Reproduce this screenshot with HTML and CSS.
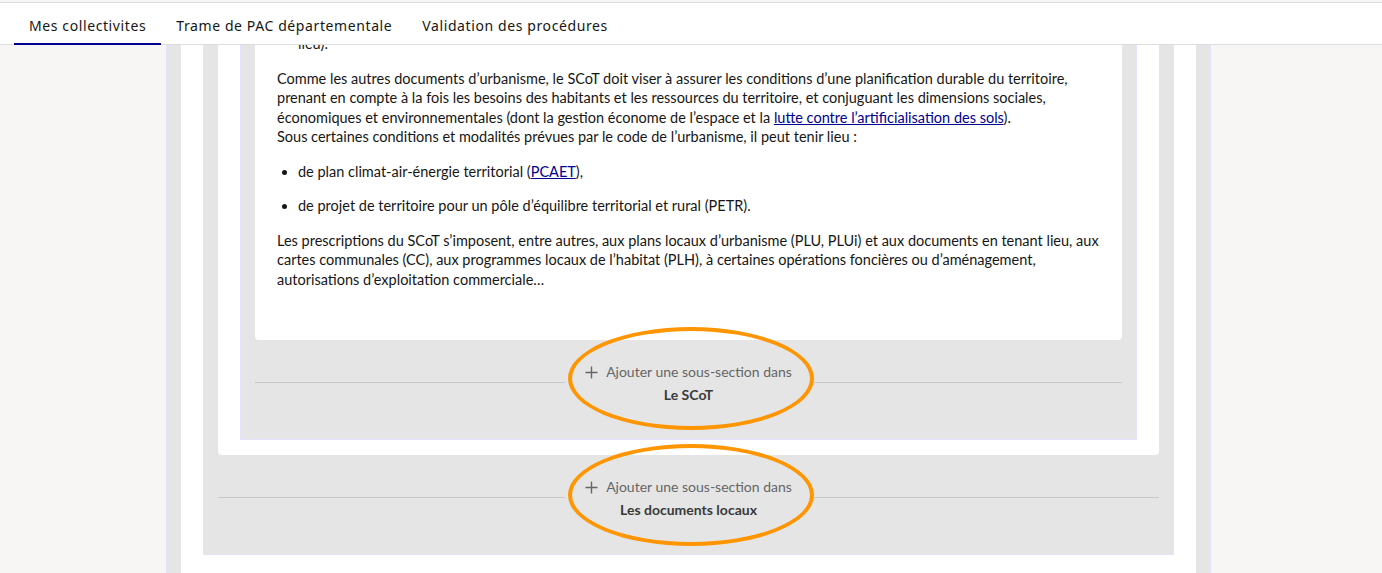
FILE: index.html
```html
<!DOCTYPE html>
<html lang="fr">
<head>
<meta charset="utf-8">
<title>Trame PAC</title>
<link rel="stylesheet" href="styles.css">
</head>
<body>
<header class="topbar">
  <nav class="tabs">
    <a class="tab active">Mes collectivites</a>
    <a class="tab">Trame de PAC départementale</a>
    <a class="tab">Validation des procédures</a>
  </nav>
</header>
<main class="main">
  <div class="page">
    <section class="section level1">
      <div class="card">
        <section class="section">
          <div class="card">
            <section class="section">
              <div class="card content">
                <p class="cont">lieu).</p>
                <p>Comme les autres documents d’urbanisme, le SCoT doit viser à assurer les conditions d’une planification durable du territoire, prenant en compte à la fois les besoins des habitants et les ressources du territoire, et conjuguant les dimensions sociales, économiques et environnementales (dont la gestion économe de l’espace et la <a href="#">lutte contre l’artificialisation des sols</a>).<br>Sous certaines conditions et modalités prévues par le code de l’urbanisme, il peut tenir lieu :</p>
                <ul>
                  <li>de plan climat-air-énergie territorial (<a href="#">PCAET</a>),</li>
                  <li>de projet de territoire pour un pôle d’équilibre territorial et rural (PETR).</li>
                </ul>
                <p>Les prescriptions du SCoT s’imposent, entre autres, aux plans locaux d’urbanisme (PLU, PLUi) et aux documents en tenant lieu, aux cartes communales (CC), aux programmes locaux de l’habitat (PLH), à certaines opérations foncières ou d’aménagement, autorisations d’exploitation commerciale…</p>
              </div>
              <div class="add-row">
                <span class="rule"></span>
                <button class="add-btn">
                  <span class="add-label"><svg class="plus" width="13" height="13" viewBox="0 0 13 13"><path d="M6.5 0.5v12M0.5 6.5h12" stroke="#666" stroke-width="1.4" fill="none"/></svg>Ajouter une sous-section dans</span>
                  <span class="add-target">Le SCoT</span>
                  <span class="mark"></span>
                </button>
                <span class="rule"></span>
              </div>
            </section>
          </div>
          <div class="add-row">
            <span class="rule"></span>
            <button class="add-btn">
              <span class="add-label"><svg class="plus" width="13" height="13" viewBox="0 0 13 13"><path d="M6.5 0.5v12M0.5 6.5h12" stroke="#666" stroke-width="1.4" fill="none"/></svg>Ajouter une sous-section dans</span>
              <span class="add-target">Les documents locaux</span>
              <span class="mark mark-low"></span>
            </button>
            <span class="rule"></span>
          </div>
        </section>
      </div>
    </section>
  </div>
</main>
</body>
</html>
```

FILE: styles.css
```css
* { box-sizing: border-box; }
html, body { margin: 0; padding: 0; }
body {
  font-family: Lato, "Noto Sans", sans-serif;
  color: #161616;
  background: #f7f6f4;
  height: 573px;
  overflow: hidden;
}
.topbar {
  margin-top: 2px;
  border-top: 1px solid #dddddd;
  border-bottom: 1px solid #dddddd;
  height: 43px;
  background: #ffffff;
  padding-left: 14px;
  position: relative;
  z-index: 2;
}
.tabs { display: flex; height: 42px; }
.tab {
  display: flex;
  align-items: center;
  padding: 4px 15px 0;
  height: 42px;
  font-family: "Noto Sans", sans-serif;
  font-size: 14px;
  letter-spacing: 0.6px;
  color: #161616;
  border-bottom: 2px solid transparent;
}
.tab.active { border-bottom-color: #000091; }

.main {
  height: 528px;
  overflow: hidden;
}
.page {
  display: grid;
  grid-template-columns: 166px 1045px;
}
.level1 { grid-column: 2; margin-top: -14px; }
.section {
  background: #e5e5e5;
  border: 1px solid #e3e3fd;
  padding: 0 14px;
}
.card {
  background: #ffffff;
  border-radius: 0 0 4px 4px;
  padding: 0 22px 15px;
}
.level1 > .card { padding-bottom: 40px; }
.content {
  padding: 0 22px 51px;
  font-size: 14.5px;
  line-height: 19.5px;
}
.content p { margin: 0 0 15px; }
.content p:last-child { margin-bottom: 0; }
.content .cont { padding-left: 21px; }
.content ul { margin: 0 0 15px; padding-left: 21px; }
.content li { margin-bottom: 15px; }
.content li:last-child { margin-bottom: 0; }
.content a { color: #000091; text-decoration: underline; }

.add-row {
  display: flex;
  align-items: center;
  height: 99px;
  padding-bottom: 15px;
}
.rule { flex: 1; height: 1px; background: #c9c9c9; }
.add-btn {
  position: relative;
  width: 248px;
  padding: 3px 0 0;
  border: 0;
  background: transparent;
  display: flex;
  flex-direction: column;
  align-items: center;
  font-family: Lato, "Noto Sans", sans-serif;
  font-size: 14px;
}
.add-label {
  display: flex;
  align-items: center;
  gap: 8px;
  line-height: 20px;
  color: #666666;
}
.plus { display: block; }
.add-target {
  margin-top: 3px;
  line-height: 20px;
  font-weight: 700;
  color: #3a3a3a;
}
.mark {
  position: absolute;
  left: 3px;
  top: -32px;
  width: 246px;
  height: 103px;
  border: 4px solid #ff9500;
  border-radius: 50%;
  pointer-events: none;
}
.mark-low { top: -30px; height: 102px; }
```
